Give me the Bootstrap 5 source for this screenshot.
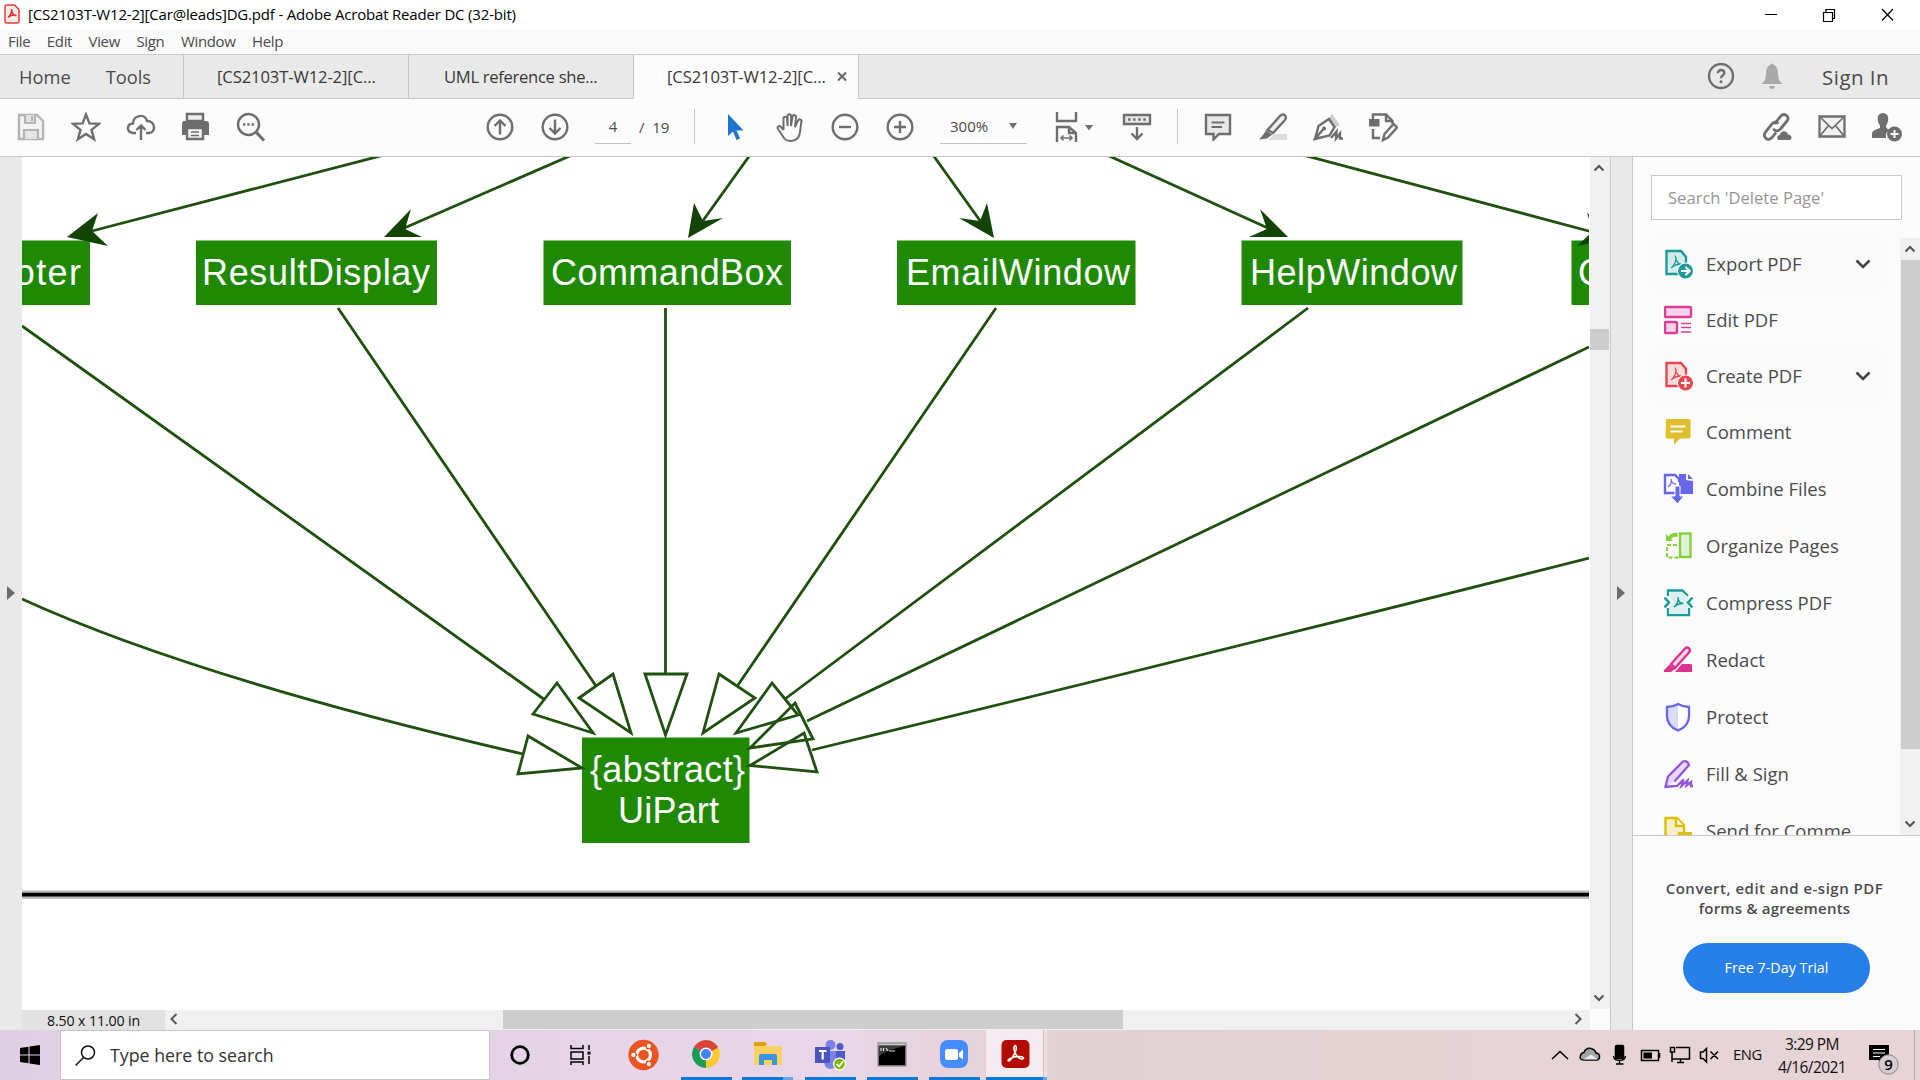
<!DOCTYPE html>
<html lang="en">
<head>
<meta charset="utf-8">
<title>[CS2103T-W12-2][Car@leads]DG.pdf - Adobe Acrobat Reader DC (32-bit)</title>
<link href="https://cdn.jsdelivr.net/npm/bootstrap@5.3.0/dist/css/bootstrap.min.css" rel="stylesheet">
<style>
body{width:1920px;height:1080px;overflow:hidden;font-family:"Open Sans","Noto Sans",sans-serif;color:#4b4b4b;background:#fbfbfb;line-height:1.2}
svg{display:block;flex:none}
.ln{fill:none;stroke:#6e6e6e;stroke-width:2.4}
.titlebar{height:29px;background:#fff;color:#000;font-size:15px;padding:0 0 2px 4px}
.titlebar .ttl{margin-left:8px;letter-spacing:-.18px}
.menus{height:25px;background:#fafafa;font-size:15px;padding:0 0 2px 8px;gap:16.5px;letter-spacing:-.35px}
.tabs{height:45px;background:#e9e9e9;border-top:1px solid #c8c8c8}
.tabs .plain{font-size:18.3px;border-bottom:1px solid #c8c8c8;width:183px;padding-left:19px;gap:35px}
.doctab{width:225px;border-left:1px solid #c8c8c8;border-bottom:1px solid #c8c8c8;font-size:16.6px;letter-spacing:-.11px;color:#383838;padding-left:33px}
.doctab.live{background:#fbfbfb;border-bottom-color:#fbfbfb}
.doctab.second{padding-left:35px;letter-spacing:-.3px}
.tabrest{border-left:1px solid #c8c8c8;border-bottom:1px solid #c8c8c8}
.signin{font-size:20.5px;letter-spacing:.45px;margin:2px 31px 0 33px}
.tools{height:58px;background:#fbfbfb;border-bottom:1px solid #c8c8c8;padding:0 0 2px 3px;font-size:15px}
.tool{width:55px;height:55px;flex:none;display:flex;align-items:center;justify-content:center}
.sep{width:1px;height:35px;background:#c8c8c8;flex:none}
.pagebox{width:112px;flex:none;padding-left:13px}
.uline{height:35px;border-bottom:1px solid #c4c4c4}
.uline.pg{width:36px;text-align:center}
.uline.zm{width:87px;margin:0 0 0 13px;padding:0 10px}
.work{height:873px}
.lstrip{width:22px;background:#e9e9e9;padding:0 0 2px 7px}
.docw{width:1568px}
.page{height:853px;background:#fff}
.vbar{width:20px;background:#f0f0f0;height:852px}
.vthumb{width:19px;height:21px;background:#cdcdcd}
.hbar{height:20px;background:#f0f0f0}
.hlabel{width:143px;height:20px;background:#e2e2e2;color:#111;font-size:14.2px;letter-spacing:-.13px;padding-top:1px}
.hthumb{width:620px;height:19px;background:#cdcdcd}
.rstrip{width:23px;background:#e9e9e9;border-left:1px solid #c8c8c8;border-right:1px solid #c8c8c8;padding:0 0 2px 6px}
.side{width:287px;background:#fbfbfb}
.find{margin:18px 0 0 18px;width:251px;height:45px;border:1px solid #c8c8c8;background:#fff;color:#959595;font-size:16.6px;padding:1px 0 0 16px}
.toollist{height:598px;margin-top:18px;overflow:hidden;border-bottom:1px solid #c8c8c8}
.entries{width:267px;padding-left:18px}
.entry{flex:none;padding-left:13px;font-size:18.5px;width:231px;white-space:nowrap}
.entry.open{background:#fafafa}
.entry span{margin-left:12px;padding-top:1px}
.sbar{width:20px;background:#f0f0f0}
.sthumb{width:19px;height:489px;background:#cdcdcd}
.promo{font-size:15px;font-weight:600;line-height:20px;margin-top:42px;padding-right:4px}
.promo .wide{letter-spacing:.5px}
.promo .tail{letter-spacing:.2px}
.trial{width:187px;height:50px;background:#277fe8;color:#fff;font-size:14.3px;border-radius:25px;margin-top:25px;border:0}
.taskbar{height:50px;background:linear-gradient(90deg,#dfd0e4 0,#e4d3e6 26%,#e9d6e8 43%,#e6d3dc 50%,#e2d2d3 56%,#e6d3d4 75%,#e7d4d6 100%);color:#111}
.start{width:60px}
.tsearch{width:430px;background:#fff;border:1px solid #c6c6c6;padding-left:14px;font-size:17.8px;color:#333}
.app{width:62px;height:50px;flex:none;display:flex;flex-direction:column;align-items:center;justify-content:space-between;padding-top:9px}
.run{width:51px;height:3px;background:#0f78d4}
.run.multi{border-right:10px solid #66a9e4}
.app.on{width:57px;background:#f4ecf1}
.app.on .run{width:57px}
.lang{width:50px;padding-left:9px;font-size:14.800px;letter-spacing:-.4px}
.clock{font-size:15.5px;line-height:23px;letter-spacing:-.6px;width:76px;padding-top:3px}
.dg{font-family:"Liberation Sans",Arial,sans-serif;font-size:36px;fill:#fff}
.edge{fill:none;stroke:#1f500f;stroke-width:2.8}
.tip{fill:#124404}
.node{fill:#1f8904}
</style>
</head>
<body>
<div class="titlebar d-flex align-items-center">
  <svg width="16" height="20" viewBox="0 0 16 20"><path d="M3 1H10.500L15 5.500V17Q15 19 13 19H3Q1 19 1 17V3Q1 1 3 1Z" fill="#fdecea" stroke="#ec3b34" stroke-width="1.500"/><path d="M4 13.500C6 12 8 8.500 7.500 6.500C7 5 8.500 6 8 8C8.500 10 10.500 11.500 12.500 11.500C10 10.500 6.500 11.500 4 13.500Z" fill="none" stroke="#e0322b" stroke-width="1.500"/></svg>
  <span class="ttl">[CS2103T-W12-2][Car@leads]DG.pdf - Adobe Acrobat Reader DC (32-bit)</span>
  <svg class="ms-auto" width="160" height="28" viewBox="0 -1 160 28" fill="none" stroke="#000" stroke-width="1.200"><path d="M5 13.500H17M63.500 11.500h9v9h-9zM66 11V8.500h8.500v9H73M122 8L133 19.500M133 8L122 19.500"/></svg>
</div>
<div class="menus d-flex align-items-center"><span>File</span><span>Edit</span><span>View</span><span>Sign</span><span>Window</span><span>Help</span></div>
<div class="tabs d-flex">
  <div class="plain d-flex align-items-center"><span>Home</span><span>Tools</span></div>
  <div class="doctab d-flex align-items-center"><span>[CS2103T-W12-2][C...</span></div>
  <div class="doctab second d-flex align-items-center"><span>UML reference she...</span></div>
  <div class="doctab live d-flex align-items-center"><span>[CS2103T-W12-2][C...</span><svg class="ms-auto me-2" width="16" height="12" viewBox="0 0 16 12"><path d="M4 1.500L12 9.500M12 1.500L4 9.500" stroke="#666" stroke-width="2"/></svg></div>
  <div class="tabrest flex-grow-1 d-flex align-items-center justify-content-end">
    <svg width="28" height="28" viewBox="0 0 28 28"><circle cx="14" cy="13" r="12" class="ln"/><path class="ln" d="M10.800 10.300C10.800 5.800 17.300 6.200 17.300 10C17.300 12.500 14 12.400 14 15.300"/><circle cx="14" cy="18.800" r="1.500" fill="#6e6e6e"/></svg>
    <svg class="ms-4 me-1" width="26" height="28" viewBox="0 1 26 28" fill="#a9a9a9"><path d="M11 3Q13 0 15 3Q19 5 19 12Q19 19 23.500 22H2.500Q7 19 7 12Q7 5 11 3ZM10 24H16Q15.500 27 13 27Q10.500 27 10 24Z"/></svg>
    <span class="signin">Sign In</span>
  </div>
</div>
<div class="tools d-flex align-items-center">
  <div class="tool"><svg width="28" height="28" viewBox="0 0 28 28"><path d="M2 2H20L26 8V26H2Z" fill="#f4f4f4" stroke="#b4b4b4" stroke-width="2.400"/><path d="M8 2V10H18V2M7 26V17H21V26" fill="#e4e4e4" stroke="#b4b4b4" stroke-width="2.200"/><path d="M15 3V8" stroke="#b4b4b4" stroke-width="2"/></svg></div>
  <div class="tool"><svg width="30" height="30" viewBox="0 0 30 30"><path class="ln" d="M15 2.500L18.400 11.400L28 11.900L20.500 17.900L23.100 27.200L15 21.900L6.900 27.200L9.500 17.900L2 11.900L11.600 11.400Z"/></svg></div>
  <div class="tool"><svg width="30" height="30" viewBox="0 0 30 30"><path class="ln" d="M10 21H7C0 20 .5 12 7 11.500C7 3 19 1 21 9C30 9 30 21 23 21H20M15 28V14M10.500 18L15 13.500L19.500 18"/></svg></div>
  <div class="tool"><svg width="30" height="30" viewBox="1 0 30 30"><path d="M7 2H23V9H7Z" fill="#eee" stroke="#6e6e6e" stroke-width="2.400"/><path d="M2 12Q2 9 4 9H26Q29 9 29 12V23H24V16H6V23H2Z" fill="#6e6e6e"/><path d="M7 16H23V27H7Z" fill="#f4f4f4" stroke="#6e6e6e" stroke-width="2.400"/><path d="M11 20H19M11 23.500H19" stroke="#6e6e6e" stroke-width="1.500"/></svg></div>
  <div class="tool"><svg width="30" height="30" viewBox="0 0 30 30"><circle class="ln" cx="12.500" cy="12.500" r="10.500"/><path d="M20 20L28 28.500" stroke="#6e6e6e" stroke-width="3.200"/><path d="M7 12.500h2.300m2 0h2.300m2 0h2.300" stroke="#6e6e6e" stroke-width="2.300"/></svg></div>
  <div class="tool" style="margin-left:194px"><svg width="28" height="28" viewBox="0 0 28 28"><circle class="ln" cx="14" cy="14" r="12.300"/><path class="ln" d="M14 21.500V7.500M8.500 13L14 7.500L19.500 13"/></svg></div>
  <div class="tool"><svg width="28" height="28" viewBox="0 0 28 28"><circle class="ln" cx="14" cy="14" r="12.300"/><path class="ln" d="M14 6.500V20.500M8.500 15L14 20.500L19.500 15"/></svg></div>
  <div class="pagebox d-flex align-items-center"><div class="uline pg d-flex align-items-center justify-content-center">4</div><span class="ms-2">/&nbsp; 19</span></div>
  <div class="sep"></div>
  <div class="tool" style="margin-left:12px"><svg width="22" height="28" viewBox="0 0 22 28"><path d="M4 1V23L9 18.500L12.500 27L16 25.500L12.500 17.500H19.500Z" fill="#1f74cf"/></svg></div>
  <div class="tool"><svg width="30" height="30" viewBox="0 0 30 30"><path class="ln" style="stroke-width:2" d="M8.500 18L8.500 6.500C8.500 4.300 11.700 4.300 12 6.500L12.600 14V4C12.600 1.500 16 1.500 16 4V14L17.500 4.500C18 2.300 21.300 3 21 5L20 15L23 8.500C24 6.500 27 7.500 26.500 9.500C25.500 14 25.500 17 25 20C24 31 11 31 8 24.500L3 17C1.500 14.500 4.500 13 6 15L8.500 18"/></svg></div>
  <div class="tool"><svg width="28" height="28" viewBox="0 0 28 28"><circle class="ln" cx="14" cy="14" r="12.300"/><path class="ln" d="M8 14H20"/></svg></div>
  <div class="tool"><svg width="28" height="28" viewBox="0 0 28 28"><circle class="ln" cx="14" cy="14" r="12.300"/><path class="ln" d="M8 14H20M14 8V20"/></svg></div>
  <div class="uline zm d-flex align-items-center justify-content-between"><span>300%</span><svg width="8" height="6" viewBox="0 0 8 6"><path d="M0 0H8L4 6Z" fill="#6e6e6e"/></svg></div>
  <svg style="margin-left:27px" width="40" height="32" viewBox="0 0 40 32"><path class="ln" d="M3 1V10H22V1M3 31V16H15L22 22V31M15 16V22H22"/><path d="M7 27H18M9.500 24.500L7 27L9.500 29.500M15.500 24.500L18 27L15.500 29.500" fill="none" stroke="#6e6e6e" stroke-width="1.600"/><path d="M31 14H39L35 19.500Z" fill="#6e6e6e"/></svg>
  <div class="tool" style="margin-left:15px"><svg width="30" height="28" viewBox="0 0 30 28"><path d="M2 2H28V11H2Z" fill="#e8e8e8" stroke="#6e6e6e" stroke-width="2.400"/><path d="M6 6.500H24" stroke="#6e6e6e" stroke-width="2.400" stroke-dasharray="2.500 2.600"/><path class="ln" d="M15 14V25.500M9.500 20.500L15 26L20.500 20.500"/></svg></div>
  <div class="sep" style="margin-left:13px"></div>
  <div class="tool" style="margin-left:12px"><svg width="28" height="28" viewBox="0 0 28 28"><path d="M2 2H26V21H15L9.500 26.500V21H2Z" fill="#e8e8e8" stroke="#6e6e6e" stroke-width="2.400"/><path d="M7.500 9.500H20.500M7.500 14H18" stroke="#6e6e6e" stroke-width="2"/></svg></div>
  <div class="tool"><svg width="30" height="30" viewBox="0 0 30 30"><path d="M10 28L16 22H29V28Z" fill="#ddd"/><path d="M9.500 18L22 4C25 .5 30 4 27 8L15 21Z" fill="#eee" stroke="#6e6e6e" stroke-width="2.400"/><path d="M8 18.500L14.500 22.500L9 26.500L1 27.500L5 23Z" fill="#6e6e6e"/></svg></div>
  <div class="tool"><svg width="30" height="30" viewBox="0 0 30 30"><path d="M16 6L19 1.500L27 13.500L22 15Z" fill="#ccc"/><path class="ln" d="M2 27L5.500 14L16 7L21.500 15L16.500 23.500L2 27L10 17.500M18 26L23.500 19.500L23 26.500L27 21.500V26.500H30"/><circle cx="11" cy="16.500" r="2" fill="#6e6e6e"/></svg></div>
  <div class="tool"><svg width="30" height="30" viewBox="0 0 30 30"><path class="ln" d="M5 8V2.500H18L24.500 9V12M18 2.500V9H24.500M5 17V26H12"/><path d="M1 7H11.500V14.500H1Z" fill="#6e6e6e"/><path d="M15 28L16.500 22L25.500 12L29 15.500L20 25.500Z" class="ln"/></svg></div>
  <div class="tool ms-auto"><svg width="30" height="30" viewBox="0 0 30 30"><path class="ln" style="stroke-width:2.800" d="M12.500 12L18.500 4.500C22.500 0 28.500 5 25 9L18 17.500C15 20 12 18.500 11.500 16.500M16.500 11.500C14 9.500 11.500 10 10 12L3.500 20C0 25 6 30 10 25.500L14 20.500"/><path d="M17 28C14 27.500 15 23 18 23C18.500 18 25 18 26 22.500C30 22.500 31 28 27 28Z" fill="#6e6e6e"/></svg></div>
  <div class="tool"><svg width="28" height="28" viewBox="0 0 28 28"><path d="M1.500 3.500H26.500V23.500H1.500Z" fill="#f2f2f2" stroke="#6e6e6e" stroke-width="2.300"/><path d="M2 4L14 15.500L26 4M2 23L10.500 12.500M26 23L17.500 12.500" fill="none" stroke="#6e6e6e" stroke-width="1.700"/></svg></div>
  <div class="tool" style="margin-right:6px"><svg width="30" height="30" viewBox="0 0 30 30"><path d="M11 1C18 1 17 10 14 13.500C14 17 16 17 18 18Q13 20 14 26H0V22Q0 19 3 18L8 16V13.500C5 10 4 1 11 1Z" fill="#6e6e6e"/><circle cx="22.500" cy="22" r="7.500" fill="#6e6e6e"/><path d="M18.500 22H26.500M22.500 18V26" stroke="#fff" stroke-width="2"/></svg></div>
</div>
<div class="work d-flex">
  <div class="lstrip d-flex align-items-center"><svg width="8" height="14" viewBox="0 0 8 14"><path d="M0 0L8 7L0 14Z" fill="#6b6b6b"/></svg></div>
  <div class="docw">
    <div class="page">
      <svg width="1567" height="853" viewBox="22 157 1567 853">
        <g class="node"><path d="M0 240.500H90V305H0ZM196 240.500H437V305H196ZM543.500 240.500H791V305H543.500ZM897 240.500H1135.500V305H897ZM1241.500 240.500H1462.500V305H1241.500ZM1571.500 240.500H1700V305H1571.500ZM582 737.500H749.500V843H582Z"/></g>
        <g class="edge">
          <path d="M384 155L92 231M572 155L402 229M750 155L702 222M933 155L981 222M1107 155L1270 229M1303 155L1600 234"/>
          <path d="M665.500 308V674M645 674H687L665.500 735Z"/>
          <path d="M338 308L596 686M579 698L613 674L631 733Z"/>
          <path d="M22 326L545 700M533 714L557 683L593 733Z"/>
          <path d="M22 599Q195 678 523 754M528 736L518 774L582 768Z"/>
          <path d="M996 308L738 685M719 674L755 698L703 733Z"/>
          <path d="M1308 308L785 699M772 683L798 715L736 733Z"/>
          <path d="M1589 347L807 721M795 703L813 739L750 748Z"/>
          <path d="M1589 558Q1250 644 812 750M804 733L817 772L750 765.500Z"/>
        </g>
        <g class="tip"><path d="M67 237L98 213L92 231L108 246ZM384 237L411 209L405 229L422 237ZM688 238L694 203L703 221L723 218ZM994 238L987 203L980 221L959 218ZM1288 237L1260 209L1267 229L1249 237ZM1620 237L1587 213L1593 231L1577 246Z"/></g>
        <g class="dg">
          <text x="-30" y="284.500" textLength="111">Footer</text>
          <text x="202" y="284.500" textLength="228">ResultDisplay</text>
          <text x="551" y="284.500" textLength="232">CommandBox</text>
          <text x="906" y="284.500" textLength="224">EmailWindow</text>
          <text x="1250" y="284.500" textLength="207">HelpWindow</text>
          <text x="1578" y="284.500">C</text>
          <text x="590" y="781.500" textLength="155">{abstract}</text>
          <text x="618" y="822.500" textLength="101">UiPart</text>
        </g>
        <path d="M22 890.500H1589V899H22Z" fill="#bcbcbc"/><path d="M22 892.800H1589V896.500H22Z" fill="#000"/>
      </svg>
    </div>
    <div class="hbar d-flex">
      <div class="hlabel d-flex align-items-center justify-content-center"><span>8.50 x 11.00 in</span></div>
      <svg style="margin:3px 0 0 4px" width="10" height="12" viewBox="0 0 10 12"><path d="M7.500 1L2.500 6L7.500 11" fill="none" stroke="#555" stroke-width="2"/></svg>
      <div class="hthumb" style="margin-left:324px"></div>
      <svg class="ms-auto" style="margin:3px 7px 0 0" width="10" height="12" viewBox="0 0 10 12"><path d="M2.500 1L7.500 6L2.500 11" fill="none" stroke="#555" stroke-width="2"/></svg>
    </div>
  </div>
  <div class="vbar d-flex flex-column">
    <svg style="margin:6px 0 0 3px" width="12" height="10" viewBox="0 0 12 10"><path d="M1.500 7.500L6 3L10.500 7.500" fill="none" stroke="#555" stroke-width="2"/></svg>
    <div class="vthumb" style="margin-top:156px"></div>
    <svg style="margin:auto 0 6px 3px" width="12" height="10" viewBox="0 0 12 10"><path d="M1.500 2.500L6 7L10.500 2.500" fill="none" stroke="#555" stroke-width="2"/></svg>
  </div>
  <div class="rstrip d-flex align-items-center"><svg width="8" height="14" viewBox="0 0 8 14"><path d="M0 0L8 7L0 14Z" fill="#6b6b6b"/></svg></div>
  <div class="side">
    <div class="find d-flex align-items-center"><span>Search 'Delete Page'</span></div>
    <div class="toollist d-flex">
      <div class="entries d-flex flex-column">
        <div class="entry open d-flex align-items-center" style="height:52px"><svg width="30" height="30" viewBox="0 0 30 30"><path d="M2.500 2H17L22 8V25H2.500Z" fill="#d3ebeb" stroke="#1e9a9c" stroke-width="2.400"/><path d="M7 19C11 16 13 10 11.500 8C12 13 14 15 18 15.500C13 14.500 9 17 7 19" fill="none" stroke="#1e9a9c" stroke-width="1.300"/><circle cx="21.500" cy="22" r="8.500" fill="#fbfbfb"/><circle cx="21.500" cy="22" r="7.500" fill="#1e9a9c"/><path d="M17 22H24M21.500 18L25.500 22L21.500 26" fill="none" stroke="#fff" stroke-width="2.200"/></svg><span>Export PDF</span><svg class="ms-auto" style="margin-right:11px" width="16" height="10" viewBox="0 0 16 10"><path d="M1.500 1.500L8 8L14.500 1.500" fill="none" stroke="#444" stroke-width="2.600"/></svg></div>
        <div class="entry d-flex align-items-center" style="height:60px"><svg width="30" height="30" viewBox="1 0 30 30"><g fill="#f6d3e8" stroke="#dd3b96" stroke-width="2.400"><rect x="2" y="2" width="26" height="10" rx="1"/><rect x="2" y="17" width="12" height="11" rx="1"/></g><path d="M18 18.500H28M18 22.500H28M18 27H28" stroke="#dd3b96" stroke-width="1.300"/></svg><span>Edit PDF</span></div>
        <div class="entry open d-flex align-items-center" style="height:52px"><svg width="30" height="30" viewBox="0 0 30 30"><path d="M2.500 2H17L22 8V25H2.500Z" fill="#f9dddd" stroke="#e34850" stroke-width="2.400"/><path d="M7 19C11 16 13 10 11.500 8C12 13 14 15 18 15.500C13 14.500 9 17 7 19" fill="none" stroke="#e34850" stroke-width="1.300"/><circle cx="21.500" cy="22" r="8.500" fill="#fbfbfb"/><circle cx="21.500" cy="22" r="7.500" fill="#e34850"/><path d="M17 22H26M21.500 17.500V26.500" fill="none" stroke="#fff" stroke-width="2.200"/></svg><span>Create PDF</span><svg class="ms-auto" style="margin-right:11px" width="16" height="10" viewBox="0 0 16 10"><path d="M1.500 1.500L8 8L14.500 1.500" fill="none" stroke="#444" stroke-width="2.600"/></svg></div>
        <div class="entry d-flex align-items-center" style="height:60px"><svg width="30" height="30" viewBox="1 0 30 30"><path d="M3 3Q3 2 4.500 2H26Q27.500 2 27.500 3.500V20Q27.500 21.500 26 21.500H17L11 28V21.500H4Q2.500 21.500 2.500 20Z" fill="#dfbf2b"/><path d="M7.500 9.500H22.500M7.500 14.500H19.500" stroke="#fff" stroke-width="2"/></svg><span>Comment</span></div>
        <div class="entry d-flex align-items-center" style="height:54px"><svg width="32" height="32" viewBox="1 1 32 32" style="margin:0 -1px"><path d="M14 21H3V3H13L17 7V10" fill="#fff" stroke="#6767ec" stroke-width="2.400"/><path d="M17 2H24V8L31 9V22H17Z" fill="#6767ec"/><path d="M26 2L31 7H26Z" fill="#6767ec"/><path d="M6 15C9 13 10 9 9 7C9.500 11 11 12 14 12" fill="none" stroke="#6767ec" stroke-width="1.300"/><path d="M13 14H18V24H22L15.500 32L8.500 24H13Z" fill="#6767ec" stroke="#fff" stroke-width="1"/></svg><span>Combine Files</span></div>
        <div class="entry d-flex align-items-center" style="height:60px"><svg width="30" height="30" viewBox="1 0 30 30"><rect x="17" y="2.500" width="10.500" height="23.500" fill="#e0f1d5" stroke="#85d03d" stroke-width="2.400"/><path d="M14 14H4V26.500H16" fill="none" stroke="#85d03d" stroke-width="2" stroke-dasharray="4 2"/><path d="M3 10V3L5.500 5.500Q9 1 14.500 2V6Q10 5 8 8L10 10Z" fill="#85d03d"/></svg><span>Organize Pages</span></div>
        <div class="entry d-flex align-items-center" style="height:54px"><svg width="30" height="30" viewBox="1 0 30 30"><path d="M5 8V2.500H19.500L25 8M5 20V27H26V20" fill="none" stroke="#1e9a9c" stroke-width="2.400"/><path d="M6 4H19L25 9V26H6V19L11 14.500L6 9Z" fill="#ddf0f0"/><path d="M1.500 9.500L6 14.500L1.500 19.500M29.500 9.500L25 14.500L29.500 19.500" fill="none" stroke="#1e9a9c" stroke-width="2.600"/><path d="M11 19C14 17 16 12 15 9.500C15.500 14 17 15 20.500 15.500C17 15 13 17 11 19" fill="none" stroke="#1e9a9c" stroke-width="1.500"/></svg><span>Compress PDF</span></div>
        <div class="entry d-flex align-items-center" style="height:60px"><svg width="30" height="30" viewBox="1 0 30 30"><path d="M8 19L22 3.500C25 1 28.500 4.500 26 7.500L12 23Z" fill="#f8d5e8" stroke="#da3490" stroke-width="2.400"/><path d="M6.500 19.500L12 24L8 27H1V25ZM12 27L19 19H27.500Q29 19 29 20.500V27Z" fill="#da3490"/></svg><span>Redact</span></div>
        <div class="entry d-flex align-items-center" style="height:54px"><svg width="30" height="30" viewBox="1 0 30 30"><path d="M15 2Q20 5 26 5V14Q26 24 15 28.500Q4 24 4 14V5Q10 5 15 2Z" fill="#fff"/><path d="M15 2V28Q4 24 4 14V5Q10 5 15 2Z" fill="#dcdcf8"/><path d="M15 2Q20 5 26 5V14Q26 24 15 28.500Q4 24 4 14V5Q10 5 15 2Z" fill="none" stroke="#6767ec" stroke-width="2.300"/></svg><span>Protect</span></div>
        <div class="entry d-flex align-items-center" style="height:60px"><svg width="30" height="30" viewBox="1 0 30 30"><path d="M2.500 28L5 17.500L20 2.500Q24 1 26 6L11.500 22.500" fill="#e7d8f7" stroke="#9256d9" stroke-width="2.300"/><path d="M1.500 28L14 27L20.500 20.500L18.500 27L24.500 21.500L23.500 26.500L28 23V27H30" fill="none" stroke="#9256d9" stroke-width="2.300"/></svg><span>Fill &amp; Sign</span></div>
        <div class="entry d-flex align-items-center" style="height:54px"><svg width="30" height="30" viewBox="1 0 30 30"><path d="M2.500 28V2H14L21 9V28Z" fill="#f6efca" stroke="#dfbf00" stroke-width="2.400"/><path d="M13 2V10H21" fill="#fff" stroke="#dfbf00" stroke-width="2.400"/><path d="M15 16H29V30H15Z" fill="#dfbf00"/><path d="M19 20H26" stroke="#fff" stroke-width="2"/></svg><span>Send for Comme</span></div>
      </div>
      <div class="sbar d-flex flex-column align-items-center">
        <svg style="margin:6px 0 6px -1px" width="12" height="10" viewBox="0 0 12 10"><path d="M1.500 7.500L6 3L10.500 7.500" fill="none" stroke="#555" stroke-width="2"/></svg>
        <div class="sthumb"></div>
        <svg style="margin:auto 0 6px -1px" width="12" height="10" viewBox="0 0 12 10"><path d="M1.500 2.500L6 7L10.500 2.500" fill="none" stroke="#555" stroke-width="2"/></svg>
      </div>
    </div>
    <div class="text-center promo"><span class="wide">Convert, edit and e-sign PDF</span><br><span class="tail">forms &amp; agreements</span></div>
    <button class="trial d-block mx-auto"><span>Free 7-Day Trial</span></button>
  </div>
</div>
<div class="taskbar d-flex">
  <div class="start d-flex align-items-center justify-content-center"><svg width="20" height="20" viewBox="0 0 20 20"><path d="M0 3L8.500 1.700V9.500H0ZM9.500 1.500L20 0V9.500H9.500ZM0 10.500H8.500V18.300L0 17ZM9.500 10.500H20V20L9.500 18.500Z"/></svg></div>
  <div class="tsearch d-flex align-items-center"><svg width="21" height="21" viewBox="0 0 21 21" fill="none" stroke="#111" stroke-width="1.500"><circle cx="13" cy="7.500" r="6.500"/><path d="M8.500 12.500L.5 20.500"/></svg><span style="margin-left:14px;padding-top:1px">Type here to search</span></div>
  <div class="app" style="width:60px"><svg width="30" height="30" viewBox="0 0 30 30"><circle cx="15" cy="16" r="8.300" fill="none" stroke="#000" stroke-width="2.800"/></svg></div>
  <div class="app" style="width:60px"><svg width="30" height="30" viewBox="0 0 30 30" fill="none" stroke="#000" stroke-width="1.500"><path d="M6 6V9.500H18V6M6 13H18V20H6ZM6 26V23H18V26M24 6V11M24 17V25"/><path d="M22.500 14H25.500" stroke-width="3"/></svg></div>
  <div class="app" style="width:66px"><svg width="32" height="32" viewBox="-.5 0 30 30"><circle cx="15" cy="15" r="14.200" fill="#e95420"/><circle cx="15" cy="15" r="6.500" fill="none" stroke="#fff" stroke-width="3"/><path d="M5 15H9M20 6L18 9.500M20 24L18 20.500" stroke="#e95420" stroke-width="2"/><g fill="#fff" stroke="#e95420"><circle cx="5.500" cy="15" r="2.500"/><circle cx="20" cy="6.500" r="2.500"/><circle cx="20" cy="23.500" r="2.500"/></g></svg></div>
  <div class="app" style="width:60px"><svg width="30" height="30" viewBox="0 0 30 30"><path d="M15 15L2.900 8A14 14 0 0 1 27.100 8Z" fill="#d9453b"/><path d="M15 15L27.100 8A14 14 0 0 1 15 29Z" fill="#fbc934"/><path d="M15 15L15 29A14 14 0 0 1 2.900 8Z" fill="#1c9b55"/><path d="M15 8.500H27.300L15 15Z" fill="#d9453b"/><circle cx="15" cy="15" r="6.500" fill="#fff"/><circle cx="15" cy="15" r="5" fill="#4384f2"/></svg><div class="run"></div></div>
  <div class="app" style="width:63px"><svg width="30" height="30" viewBox="0 0 30 30"><path d="M1 4H12L14 7H29V26H1Z" fill="#fbd063"/><path d="M1 4Q1 3 2 3H12L14 5L12 7H1Z" fill="#e0a010"/><path d="M6 26V17Q6 15 8 15H22Q24 15 24 17V26H19V21H11V26Z" fill="#3b95da"/></svg><div class="run multi"></div></div>
  <div class="app"><svg width="32" height="32" viewBox="0 0 32 32" style="margin-bottom:-2px"><circle cx="16.500" cy="6" r="5" fill="#7b83eb"/><circle cx="26" cy="7.500" r="3.500" fill="#5059c9"/><path d="M10 12H24V22Q23 30 16 30Q10 29 10 22Z" fill="#7b83eb"/><path d="M22 12H31V20Q31 24 25 24H22Z" fill="#5059c9"/><rect x="1" y="8" width="15" height="16" fill="#4b53bc"/><path d="M5 12H12.500M8.700 12V20.500" stroke="#fff" stroke-width="2.200"/><circle cx="25.500" cy="25" r="6.500" fill="#fff"/><circle cx="25.500" cy="25" r="5.300" fill="#7fba00"/><path d="M22.500 25L25 27.500L29 22.500" fill="none" stroke="#fff" stroke-width="1.700"/></svg><div class="run"></div></div>
  <div class="app"><svg width="30" height="30" viewBox="0 0 30 30"><path d="M1 4H29V27H1Z" fill="#000" stroke="#999" stroke-width="1.500"/><path d="M1.500 4.500H28.500V6.500H1.500Z" fill="#ccc"/><path d="M2 7H28Q12 10 2 17Z" fill="#3c3c3c"/><path d="M4 9V12M6.500 9V12M9 9L11 12M12 12H18" stroke="#ddd" stroke-width="1.200"/></svg><div class="run"></div></div>
  <div class="app me-auto" style="margin-right:1px!important"><svg width="30" height="30" viewBox="0 0 30 30"><rect x="1" y="1" width="28" height="28" rx="8" fill="#458dfc"/><rect x="6" y="10" width="13" height="11" rx="2.500" fill="#fff"/><path d="M20 14L24 10.500V20.500L20 17.500Z" fill="#fff"/></svg><div class="run"></div></div>
  <div class="app on"><svg width="30" height="30" viewBox="-.5 0 30 30"><rect x="1" y="1" width="28" height="28" rx="5" fill="#b30b00"/><path d="M8 22C6 21 12 17.500 17 17.500C24 17 24 20 21.500 20C17 20 13 13 13.500 8C14.500 5 16.500 7 15.500 11C14 16 10 22 8 22Z" fill="none" stroke="#fff" stroke-width="1.600"/></svg><div class="run"></div></div>
  <svg width="4" height="50" viewBox="0 0 4 50"><path d="M0 0H4V47H0Z" fill="#eadfe4"/><path d="M0 0H1V47H0Z" fill="#cdbfc6"/><path d="M0 47H4V50H0Z" fill="#66a9e4"/></svg>
  <svg class="ms-auto" width="174" height="50" viewBox="1550 1030 174 50" fill="none" stroke="#000" stroke-width="1.500"><path d="M1552 1059L1560 1051.500L1568 1059"/><path d="M1584 1060Q1579 1060 1580.500 1055.500Q1581 1053 1584 1052.500Q1586 1047.500 1591 1048.500Q1595 1049.500 1596 1053Q1600 1053.500 1599.500 1057.500Q1599 1060 1596 1060Z" fill="#a5a5a5"/><path d="M1583 1059.500L1591 1054.500L1598 1059.500Z" fill="#e8e8e8" stroke="none"/><rect x="1615.500" y="1045.500" width="8" height="13" rx="1" fill="#000"/><path d="M1613.500 1056Q1614 1060.500 1619.500 1060.500Q1625 1060.500 1625.500 1056M1619.500 1060V1064M1616 1064H1623.500M1641.500 1050.500H1658.500V1060.500H1641.500ZM1659.500 1053V1058"/><path d="M1643.500 1052.500H1652V1058.500H1643.500Z" fill="#000" stroke="none"/><path d="M1676 1047.500H1689.500V1059H1672V1052M1680.500 1059V1062.500M1677 1062.500H1684M1672 1052V1062M1670.500 1047.500H1674.500V1052H1670.500ZM1700.500 1052H1703L1706.500 1048.500V1062L1703 1058.500H1700.500ZM1710.500 1051.500L1718 1059M1718 1051.500L1710.500 1059"/></svg>
  <div class="d-flex align-items-center lang"><span>ENG</span></div>
  <div class="clock text-center"><span>3:29 PM</span><br><span>4/16/2021</span></div>
  <svg width="70" height="50" viewBox="1850 1030 70 50"><path d="M1869 1045H1889V1060H1882L1882 1064L1878 1060H1869Z"/><path d="M1873 1049.500H1885M1873 1053H1885M1873 1056.500H1880" stroke="#fff" stroke-width="1.200"/><circle cx="1888.500" cy="1064.500" r="9.700" fill="#d5cdce" stroke="#888"/><text x="1888.500" y="1070" font-size="15" font-weight="600" text-anchor="middle">9</text><path d="M1914.500 1030V1080" stroke="#b5a5a6"/></svg>
</div>
<script src="https://cdn.jsdelivr.net/npm/bootstrap@5.3.0/dist/js/bootstrap.bundle.min.js"></script>
</body>
</html>
